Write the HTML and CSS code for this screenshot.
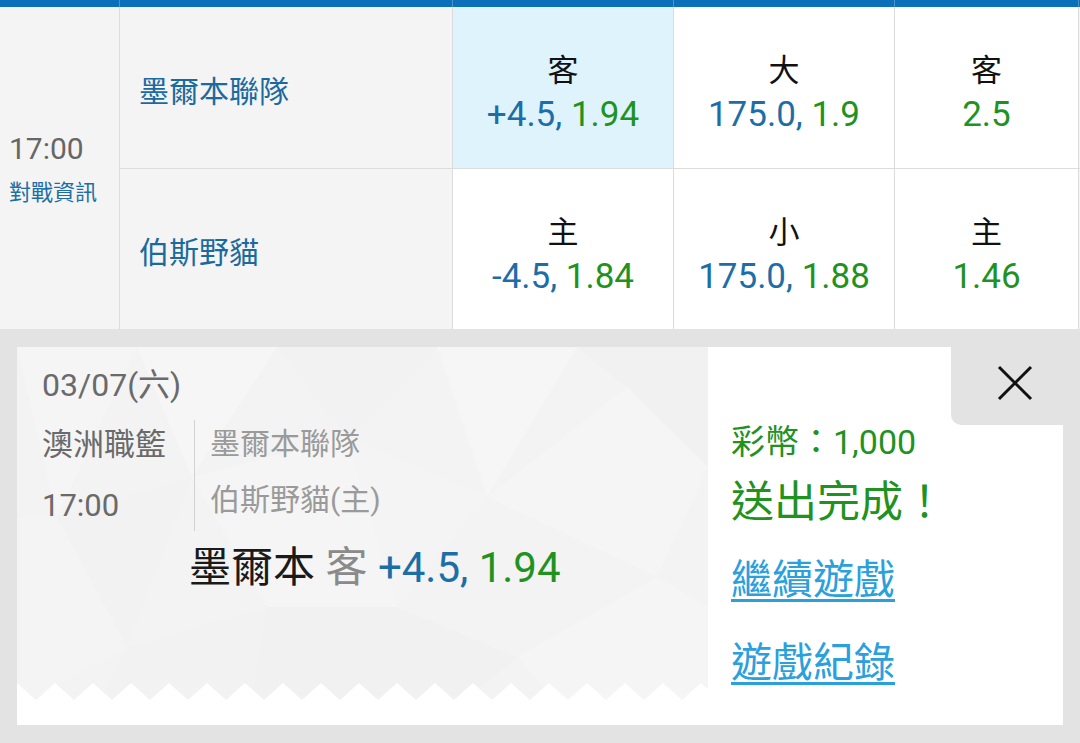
FILE: index.html
```html
<!DOCTYPE html>
<html lang="zh-Hant">
<head>
<meta charset="utf-8">
<title>投注完成</title>
<link rel="stylesheet" href="styles.css">
</head>
<body>
<div class="board">
  <div class="hd"></div><div class="hd"></div><div class="hd"></div><div class="hd"></div><div class="hd"></div><div class="hd last"></div>

  <div class="cell time-cell">
    <div class="time">17:00</div>
    <div class="info">對戰資訊</div>
  </div>
  <div class="cell team r1">墨爾本聯隊</div>
  <div class="cell odd sel r1"><div class="lbl">客</div><div class="val"><span class="b">+4.5,</span> <span class="g">1.94</span></div></div>
  <div class="cell odd r1"><div class="lbl">大</div><div class="val"><span class="b">175.0,</span> <span class="g">1.9</span></div></div>
  <div class="cell odd r1"><div class="lbl">客</div><div class="val"><span class="g">2.5</span></div></div>
  <div class="cell filler r1"></div>

  <div class="cell team">伯斯野貓</div>
  <div class="cell odd"><div class="lbl">主</div><div class="val"><span class="b">-4.5,</span> <span class="g">1.84</span></div></div>
  <div class="cell odd"><div class="lbl">小</div><div class="val"><span class="b">175.0,</span> <span class="g">1.88</span></div></div>
  <div class="cell odd"><div class="lbl">主</div><div class="val"><span class="g">1.46</span></div></div>
  <div class="cell filler"></div>
</div>

<div class="result">
  <div class="card">
    <div class="ticket">
      <svg class="pattern" width="691" height="378" viewBox="0 0 691 378" aria-hidden="true">
        <rect x="0" y="0" width="691" height="378" fill="#f3f3f3"/>
        <polygon points="0,0 120,0 40,170" fill="#f5f5f5"/>
        <polygon points="120,0 260,0 175,130" fill="#f6f6f6"/>
        <polygon points="260,0 420,0 330,90" fill="#f2f2f2"/>
        <polygon points="420,0 560,0 470,150" fill="#f6f6f6"/>
        <polygon points="560,0 691,0 691,120 610,40" fill="#f1f1f1"/>
        <polygon points="470,150 610,40 691,120 640,230" fill="#f5f5f5"/>
        <polygon points="330,90 470,150 380,260" fill="#f4f4f4"/>
        <polygon points="40,170 175,130 110,300" fill="#f2f2f2"/>
        <polygon points="175,130 330,90 380,260 250,260" fill="#f5f5f5"/>
        <polygon points="0,170 40,170 110,300 0,360" fill="#f4f4f4"/>
        <polygon points="110,300 250,260 230,378 70,378" fill="#f2f2f2"/>
        <polygon points="250,260 380,260 500,310 420,378 230,378" fill="#f1f1f1"/>
        <polygon points="380,260 470,150 640,230 500,310" fill="#f3f3f3"/>
        <polygon points="500,310 640,230 691,260 691,378 560,378" fill="#f5f5f5"/>
        <polygon fill="#ffffff" points="0,336 19,353 38,336 57,353 76,336 95,353 114,336 133,353 152,336 171,353 190,336 209,353 228,336 247,353 266,336 285,353 304,336 323,353 342,336 361,353 380,336 399,353 418,336 437,353 456,336 475,353 494,336 513,353 532,336 551,353 570,336 589,353 608,336 627,353 646,336 665,353 684,336 703,353 703,378 0,378"/>
      </svg>
      <div class="ticket-body">
        <div class="date">03/07(六)</div>
        <div class="match-info">
          <div class="league">
            <div>澳洲職籃</div>
            <div>17:00</div>
          </div>
          <div class="teams">
            <div>墨爾本聯隊</div>
            <div>伯斯野貓(主)</div>
          </div>
        </div>
        <div class="bet"><span class="pick">墨爾本</span> <span class="side">客</span> <span class="b">+4.5,</span> <span class="g">1.94</span></div>
      </div>
    </div>
    <div class="status">
      <div class="close-row">
        <div class="close-tab">
          <svg width="36" height="36" viewBox="0 0 36 36" aria-hidden="true"><path d="M2 2 L34 34 M34 2 L2 34" stroke="#111" stroke-width="3" fill="none"/></svg>
        </div>
      </div>
      <div class="coins">彩幣：1,000</div>
      <div class="done">送出完成！</div>
      <a class="link first">繼續遊戲</a>
      <a class="link second">遊戲紀錄</a>
    </div>
  </div>
</div>
</body>
</html>
```

FILE: styles.css
```css
* { box-sizing: border-box; margin: 0; padding: 0; }
html, body { width: 1080px; height: 743px; overflow: hidden; }
body {
  background: #e3e3e3;
  font-family: Roboto, "Noto Sans CJK TC", sans-serif;
  color: #111;
}

.b { color: #1d6ea6; }
.g { color: #1f921f; }

/* odds board */
.board {
  display: grid;
  grid-template-columns: 120px 333px 221px 221px 184px 1px;
  grid-template-rows: 7px 162px 160px;
  background: #ffffff;
}
.hd { background: #0b70b9; border-right: 1px solid #4a94cc; }
.hd.last { border-right: none; }

.cell { border-right: 1px solid #dcdcdc; }
.cell.r1 { border-bottom: 1px solid #dcdcdc; }
.cell.filler { border-right: none; background: #f4f4f4; }

.time-cell {
  grid-row: 2 / span 2;
  background: #f4f4f4;
  display: flex;
  flex-direction: column;
  justify-content: center;
  padding: 2px 0 0 9px;
}
.time { font-size: 30px; line-height: 36px; color: #666; }
.info { font-size: 22px; line-height: 30px; margin-top: 11px; color: #1d6ea6; }

.team {
  background: #f4f4f4;
  display: flex;
  align-items: center;
  padding: 2px 0 0 19px;
  font-size: 30px;
  color: #1b6a9e;
}

.odd {
  display: flex;
  flex-direction: column;
  align-items: center;
  justify-content: center;
  padding-top: 15px;
  background: #fff;
}
.odd.sel { background: #dff3fc; }
.lbl { font-size: 31px; line-height: 40px; color: #111; }
.val { font-size: 35px; line-height: 48px; white-space: nowrap; }

/* result area */
.result { padding: 18px 17px 0 17px; }
.card { display: flex; height: 378px; }

.ticket {
  position: relative;
  width: 691px;
  flex: none;
  overflow: hidden;
}
.pattern { position: absolute; left: 0; top: 0; }
.ticket-body { position: relative; padding: 18px 0 0 25px; }

.date { font-size: 32px; line-height: 40px; color: #6a6a6a; }

.match-info { display: flex; margin-top: 15px; }
.league {
  width: 152px;
  display: flex;
  flex-direction: column;
  gap: 11px;
  font-size: 31px;
  line-height: 50px;
  color: #6a6a6a;
}
.teams {
  border-left: 1px solid #d2d2d2;
  padding-left: 15px;
  display: flex;
  flex-direction: column;
  gap: 8px;
  font-size: 30px;
  line-height: 48px;
  color: #9a9a9a;
}

.bet {
  margin: 12px 0 0 147px;
  font-size: 42px;
  line-height: 50px;
  white-space: nowrap;
}
.pick { color: #1a1a1a; }
.side { color: #8a8a8a; }

.status {
  flex: 1;
  background: #fff;
  display: flex;
  flex-direction: column;
  padding-left: 23px;
}
.close-row { display: flex; justify-content: flex-end; }
.close-tab {
  width: 112px;
  height: 78px;
  background: #e3e3e3;
  border-bottom-left-radius: 10px;
  padding: 18px 0 0 46px;
}
.close-tab svg { display: block; }

.coins { font-size: 34px; line-height: 34px; color: #1f921f; }
.done { font-size: 43px; line-height: 52px; margin-top: 17px; color: #1f921f; }
.link {
  align-self: flex-start;
  font-size: 41px;
  line-height: 50px;
  color: #2aa0dc;
  text-decoration: underline;
  text-decoration-thickness: 3px;
  text-underline-offset: 5px;
}
.link.first { margin-top: 27px; }
.link.second { margin-top: 33px; }
```
